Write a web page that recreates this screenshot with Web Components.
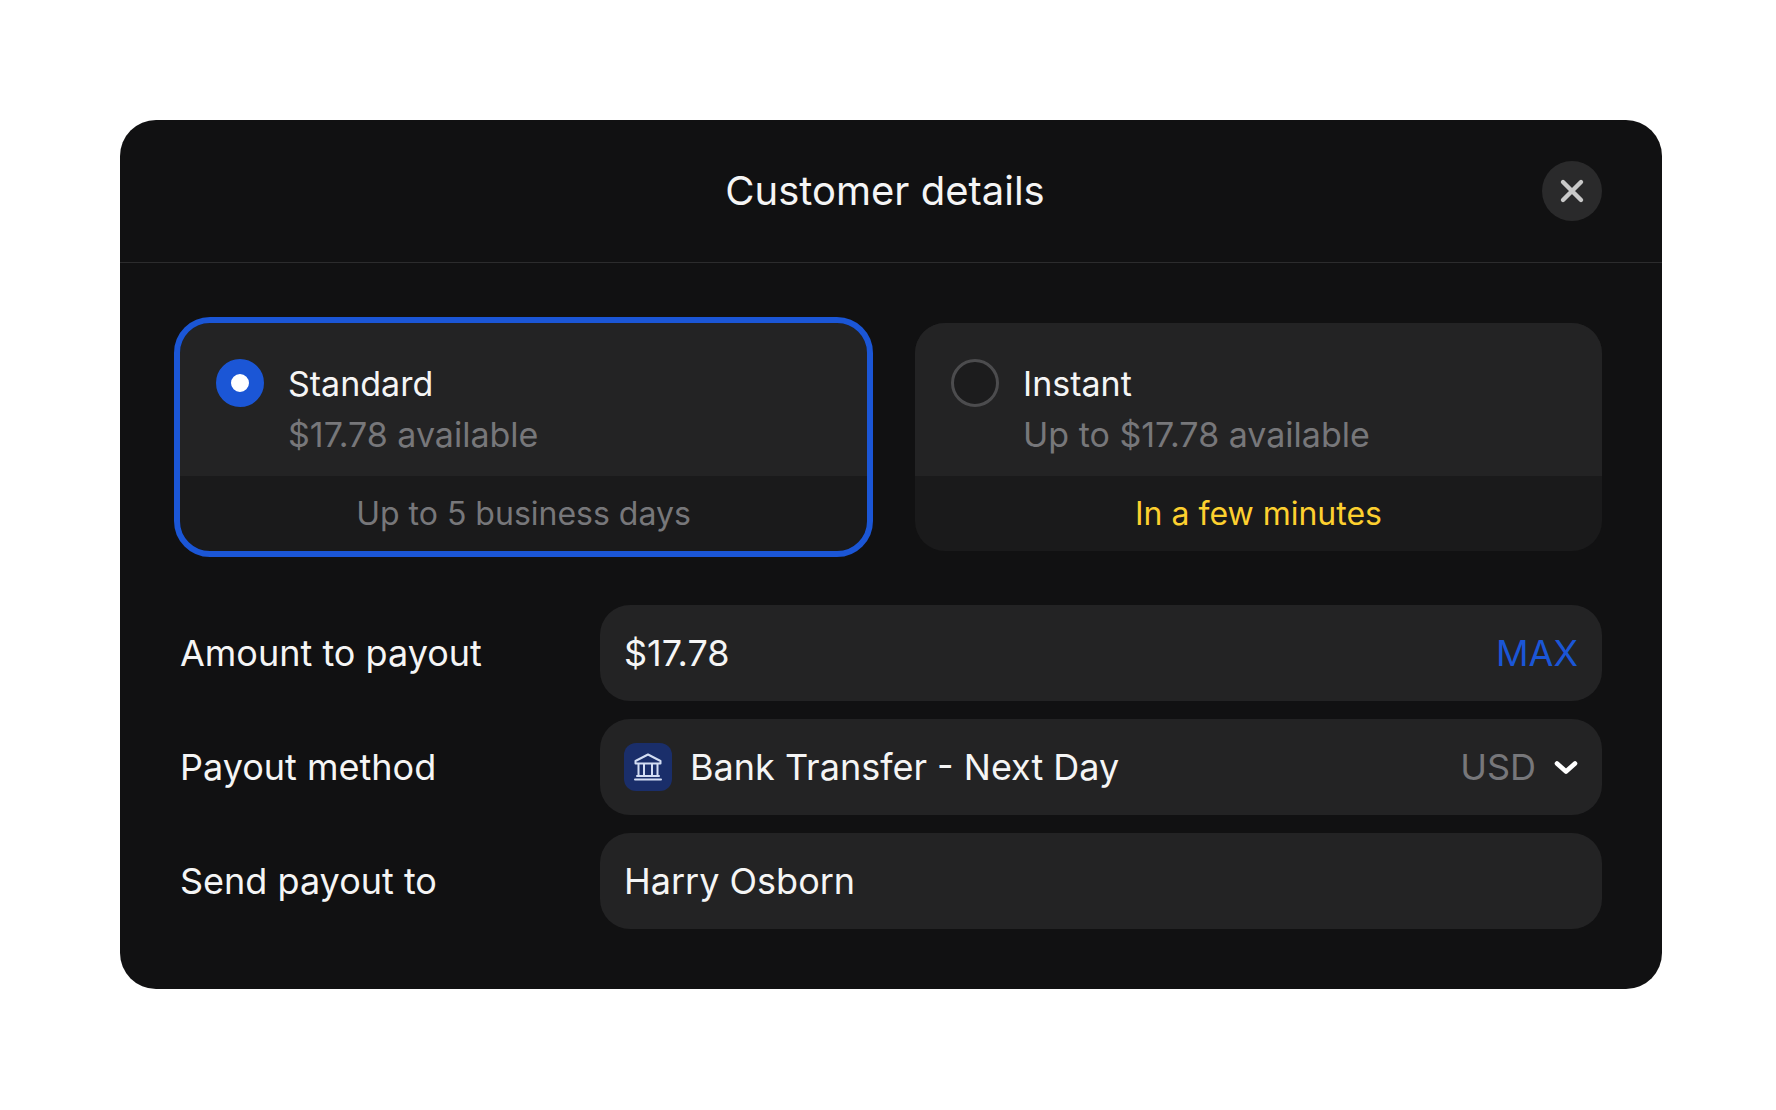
<!DOCTYPE html>
<html lang="en">
<head>
<meta charset="utf-8">
<title>Customer details</title>
<style>
  html, body { margin: 0; background: #fff; }
  body { padding: 120px 0 0 120px; font-family: Inter, "Liberation Sans", sans-serif; }
</style>
</head>
<body>
<payout-modal heading="Customer details">
  <payout-option slot="options" selected eta="Up to 5 business days" name="Standard" detail="$17.78 available"></payout-option>
  <payout-option slot="options" fast eta="In a few minutes" name="Instant" detail="Up to $17.78 available"></payout-option>

  <payout-field slot="fields" label="Amount to payout">
    $17.78
    <span slot="end" style="color:#1b56d6">MAX</span>
  </payout-field>
  <payout-field slot="fields" label="Payout method">
    <bank-icon slot="start"></bank-icon>
    Bank Transfer - Next Day
    <span slot="end" style="color:#77777a">USD</span>
    <chevron-icon slot="end"></chevron-icon>
  </payout-field>
  <payout-field slot="fields" label="Send payout to">Harry Osborn</payout-field>
</payout-modal>

<script>
class PayoutModal extends HTMLElement {
  constructor() {
    super();
    this.attachShadow({ mode: 'open' });
  }
  connectedCallback() {
    this.shadowRoot.innerHTML = `
      <style>
        :host {
          display: block;
          width: 1542px;
          background: #111112;
          border-radius: 36px;
          color: #f5f5f5;
          font-family: Inter, "Liberation Sans", sans-serif;
        }
        header {
          display: grid;
          grid-template-columns: 1fr auto 1fr;
          align-items: center;
          height: 143px;
          padding: 0 60px;
          box-sizing: border-box;
          border-bottom: 1px solid #2c2c2d;
        }
        h1 { margin: 0; font-size: 40px; font-weight: 400; line-height: 48px; transform: translateX(-6px); }
        button {
          justify-self: end;
          display: flex;
          align-items: center;
          justify-content: center;
          width: 60px;
          height: 60px;
          padding: 0;
          border: 0;
          border-radius: 50%;
          background: #2a2a2b;
        }
        .options {
          display: grid;
          grid-template-columns: 687px 687px;
          gap: 48px;
          padding: 60px 60px 54px;
        }
        .fields {
          display: flex;
          flex-direction: column;
          gap: 18px;
          padding: 0 60px 60px;
        }
      </style>
      <header>
        <span></span>
        <h1>${this.getAttribute('heading')}</h1>
        <button aria-label="Close">
          <svg width="26" height="26" viewBox="0 0 26 26" fill="none" stroke="#c9c9c9" stroke-width="4.4" stroke-linecap="round">
            <path d="M4 4l18 18M22 4L4 22"/>
          </svg>
        </button>
      </header>
      <div class="options"><slot name="options"></slot></div>
      <div class="fields"><slot name="fields"></slot></div>
    `;
  }
}
customElements.define('payout-modal', PayoutModal);

class PayoutOption extends HTMLElement {
  constructor() {
    super();
    this.attachShadow({ mode: 'open' });
  }
  connectedCallback() {
    this.shadowRoot.innerHTML = `
      <style>
        :host {
          display: block;
          height: 228px;
          border-radius: 30px;
          overflow: hidden;
          background: #1a1a1b;
        }
        :host([selected]) { outline: 6px solid #1b56d6; }
        .top {
          display: flex;
          gap: 24px;
          height: 153px;
          padding: 36px 36px 0;
          box-sizing: border-box;
          background: #232324;
        }
        .radio {
          flex: none;
          width: 48px;
          height: 48px;
          box-sizing: border-box;
          border-radius: 50%;
          border: 3px solid #4c4c4e;
          background: #1c1c1d;
        }
        :host([selected]) .radio {
          border: 15px solid #1b56d6;
          background: #fff;
        }
        .text { font-size: 34px; line-height: 51px; margin-top: -1px; }
        .name { color: #f5f5f5; }
        .detail { color: #77777a; }
        .eta {
          height: 75px;
          display: flex;
          align-items: center;
          justify-content: center;
          font-size: 32px;
          color: #77777a;
        }
        :host([fast]) .eta { color: #fdd02f; }
      </style>
      <div class="top">
        <div class="radio"></div>
        <div class="text">
          <div class="name">${this.getAttribute('name')}</div>
          <div class="detail">${this.getAttribute('detail')}</div>
        </div>
      </div>
      <div class="eta">${this.getAttribute('eta')}</div>
    `;
  }
}
customElements.define('payout-option', PayoutOption);

class PayoutField extends HTMLElement {
  constructor() {
    super();
    this.attachShadow({ mode: 'open' });
  }
  connectedCallback() {
    this.shadowRoot.innerHTML = `
      <style>
        :host {
          display: grid;
          grid-template-columns: 420px 1002px;
          align-items: center;
          font-size: 36px;
          color: #f5f5f5;
        }
        .box {
          display: flex;
          align-items: center;
          height: 96px;
          padding: 0 24px;
          box-sizing: border-box;
          border-radius: 30px;
          background: #232324;
        }
        .start { display: flex; margin-right: 18px; }
        .start:not(.used) { display: none; }
        .value { flex: 1; }
        .end { display: flex; align-items: center; gap: 18px; }
      </style>
      <div class="label">${this.getAttribute('label')}</div>
      <div class="box">
        <div class="start"><slot name="start"></slot></div>
        <div class="value"><slot></slot></div>
        <div class="end"><slot name="end"></slot></div>
      </div>
    `;
    if (this.querySelector('[slot=start]')) {
      this.shadowRoot.querySelector('.start').classList.add('used');
    }
  }
}
customElements.define('payout-field', PayoutField);

class BankIcon extends HTMLElement {
  constructor() {
    super();
    this.attachShadow({ mode: 'open' });
  }
  connectedCallback() {
    this.shadowRoot.innerHTML = `
      <style>
        :host {
          display: flex;
          align-items: center;
          justify-content: center;
          width: 48px;
          height: 48px;
          border-radius: 12px;
          background: #1a2e6a;
        }
      </style>
      <svg width="32" height="32" viewBox="0 0 32 32" fill="none" stroke="#d3ddf3" stroke-width="2" stroke-linecap="round" stroke-linejoin="round">
        <path d="M16 3.5L3.5 10v2.5h25V10z"/>
        <path d="M6.5 13v12M12 13v12M20 13v12M25.500 13v12"/>
        <path d="M5 25h22"/>
        <path d="M3 28.500h26"/>
      </svg>
    `;
  }
}
customElements.define('bank-icon', BankIcon);

class ChevronIcon extends HTMLElement {
  constructor() {
    super();
    this.attachShadow({ mode: 'open' });
  }
  connectedCallback() {
    this.shadowRoot.innerHTML = `
      <style>:host { display: flex; }</style>
      <svg width="24" height="15" viewBox="0 0 24 15" fill="none" stroke="#fff" stroke-width="4.600" stroke-linecap="round" stroke-linejoin="round">
        <path d="M3 3.500l9 8 9-8"/>
      </svg>
    `;
  }
}
customElements.define('chevron-icon', ChevronIcon);
</script>
</body>
</html>
